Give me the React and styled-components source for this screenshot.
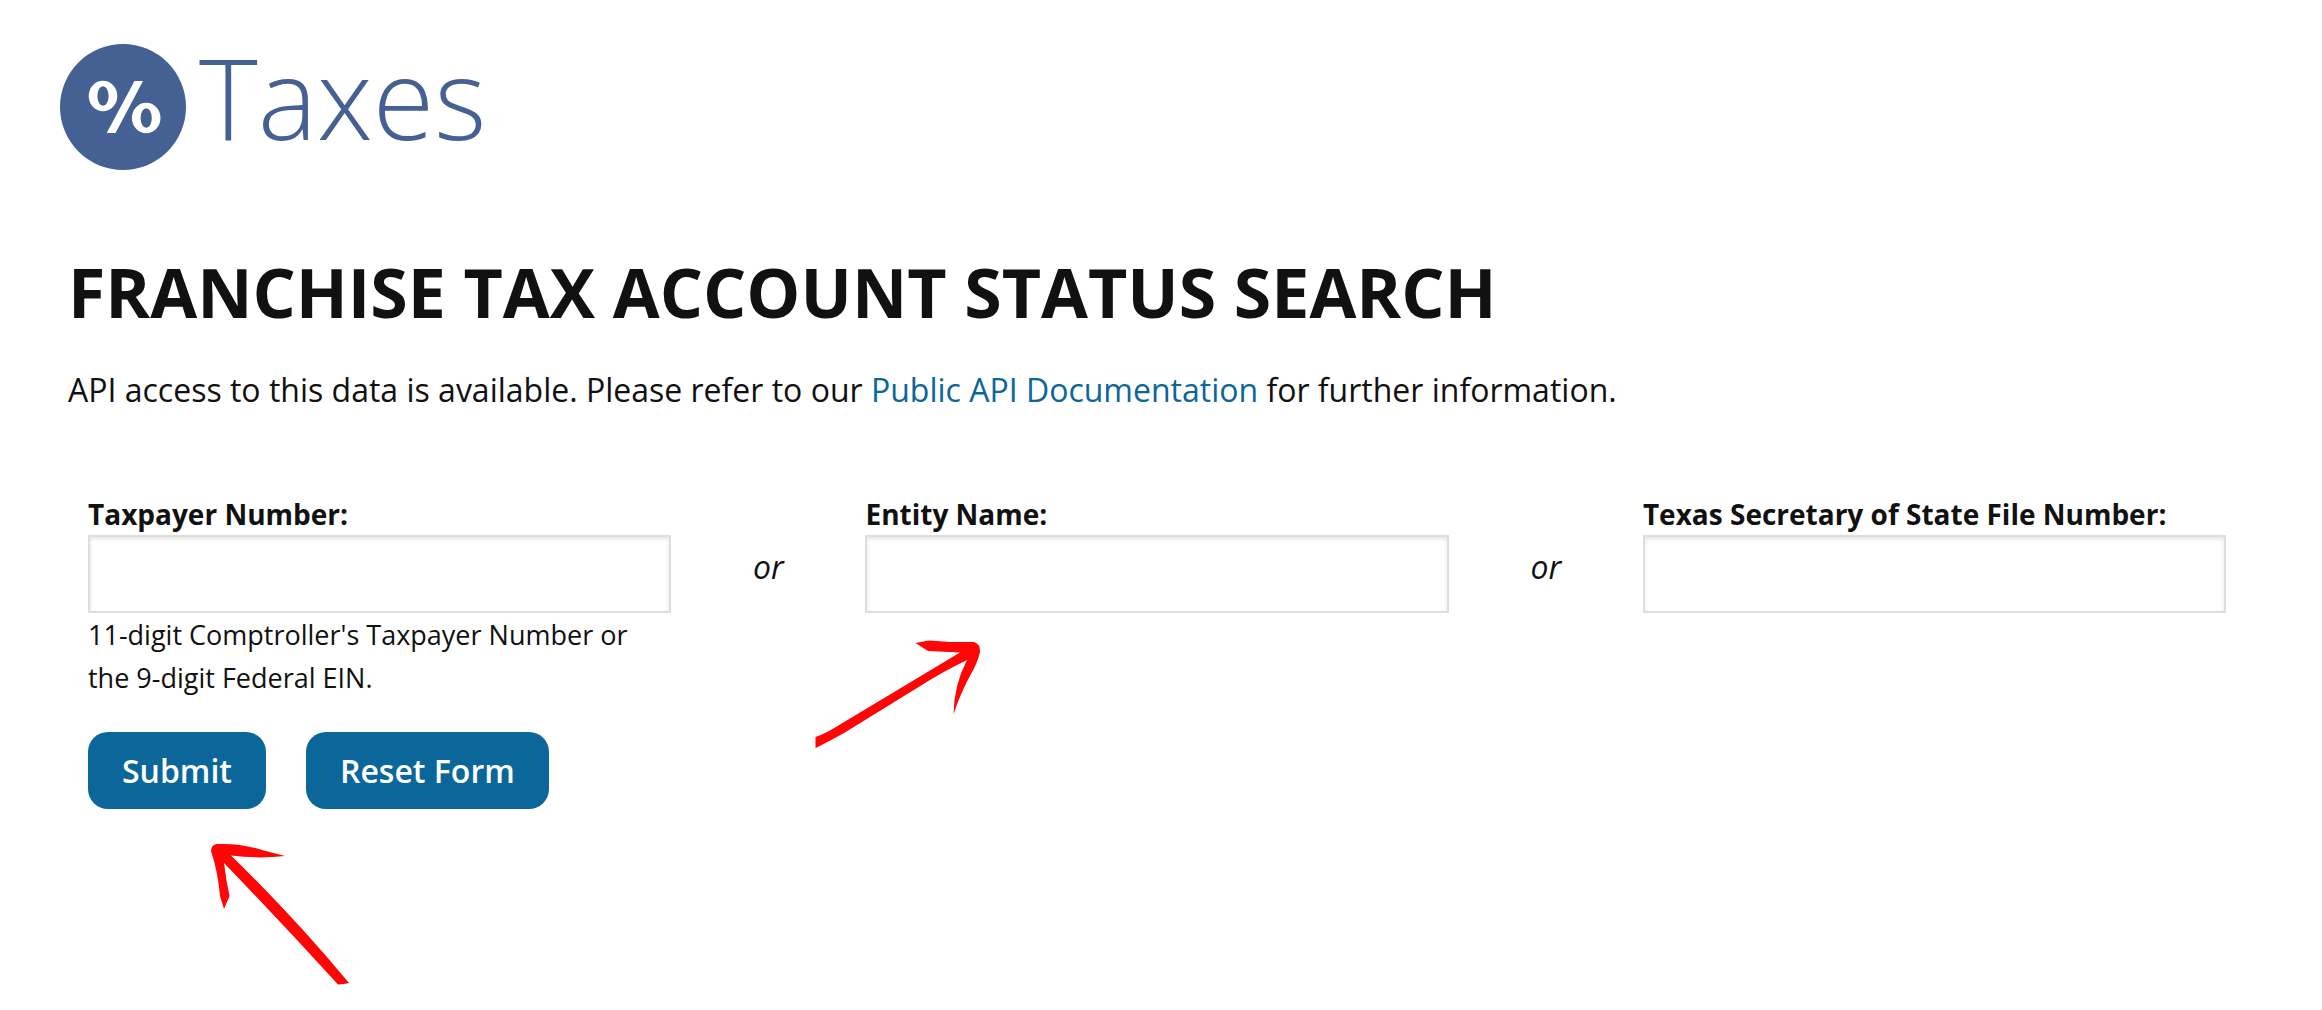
import styled, { createGlobalStyle } from 'styled-components'

const GlobalStyle = createGlobalStyle`
  * {
    box-sizing: border-box;
  }

  body {
    margin: 0;
    background-color: #FFFFFF;
    color: #111111;
    font-family: 'Open Sans', sans-serif;
    font-size: 32px;
    line-height: 50px;
  }
`

const Page = styled.div`
  min-height: 100vh;
  padding: 44px 68px 0;
`

const Brand = styled.header`
  display: flex;
  gap: 13px;
  margin-left: -8px;
  color: #456093;
`

const BrandBadge = styled.svg`
  width: 126px;
  height: 126px;
  flex: none;
  border-radius: 50%;
  background-color: #456093;
  fill: #FFFFFF;
`

const BrandName = styled.span`
  font-size: 112px;
  font-weight: 300;
  line-height: 106px;
`

const Title = styled.h1`
  margin: 80px 0 31px;
  font-size: 68px;
  font-weight: 700;
  line-height: 84px;
  text-transform: uppercase;
`

const Intro = styled.p`
  margin: 0;
`

const Link = styled.a`
  color: #0B6699;
  text-decoration: none;

  &:hover {
    text-decoration: underline;
  }
`

const Form = styled.form`
  margin-top: 80px;
  padding: 0 28px 0 20px;
`

const Fields = styled.div`
  display: grid;
  grid-template-columns: minmax(0, 3fr) minmax(0, 1fr) minmax(0, 3fr) minmax(0, 1fr) minmax(0, 3fr);
  align-items: start;
`

const Field = styled.div`
  position: relative;
`

const Label = styled.label`
  display: block;
  margin-bottom: 2px;
  font-size: 28px;
  font-weight: 700;
  line-height: 38px;
  white-space: nowrap;
`

const Input = styled.input`
  display: block;
  width: 100%;
  height: 78px;
  padding: 0 16px;
  border: 2px solid #DEDEDC;
  border-radius: 0;
  background-color: #FFFFFF;
  box-shadow: inset 0 2px 4px rgba(0, 0, 0, 0.1);
  color: inherit;
  font: inherit;
`

const Hint = styled.p`
  margin: 0;
  font-size: 27px;
  line-height: 43px;
`

const Or = styled.em`
  padding-top: 47px;
  text-align: center;
`

const Buttons = styled.div`
  display: flex;
  gap: 40px;
  margin-top: 33px;
`

const ButtonHolder = styled.div`
  position: relative;
`

const Button = styled.button`
  height: 77px;
  padding: 0 34px;
  border: none;
  border-radius: 20px;
  background-color: #0B6699;
  color: #FFFFFF;
  font-family: inherit;
  font-size: 32px;
  font-weight: 600;
  cursor: pointer;

  &:hover {
    background-color: #084E75;
  }
`

const Arrow = styled.svg`
  position: absolute;
  top: 100%;
  left: ${props => props.$left};
  fill: #FF0505;
  pointer-events: none;
`

const PercentLogo = () => (
  <BrandBadge viewBox='0 0 126 126' role='img' aria-label='%'>
    <path fillRule='evenodd' d='M28.700 52a14.300 15.300 0 1 0 28.600 0a14.300 15.300 0 1 0-28.600 0zM37.400 52a5.600 9.800 0 1 0 11.200 0a5.600 9.800 0 1 0-11.200 0z' />
    <path fillRule='evenodd' d='M71.900 74a14.300 15.300 0 1 0 28.600 0a14.300 15.300 0 1 0-28.600 0zM80.600 74a5.600 9.800 0 1 0 11.200 0a5.600 9.800 0 1 0-11.200 0z' />
    <path d='M74.500 37H83L55.500 89H46.700z' />
  </BrandBadge>
)

// hand drawn arrow pointing up and to the right
const ArrowToField = () => (
  <Arrow $left='-65px' width='200' height='140' viewBox='0 -7 200 140' aria-hidden='true'>
    <path d='M15.500 117Q27 113 40 104.500L160 32.500L128 31L115.500 23L129 20.500L150 22L174 22Q180.500 24 180 32Q177 44 171 54Q161 72 153.500 94Q154 65 167 40Q142 52 117 68L44 113Q28 122 15.500 128Z' />
  </Arrow>
)

// hand drawn arrow pointing up and to the left
const ArrowToSubmit = () => (
  <Arrow $left='92px' width='200' height='180' viewBox='0 -11 200 180' aria-hidden='true'>
    <path d='M31 31Q31 25 37 24Q60 23 82 30L105 36Q78 39 51 35.500Q114 97 169 163L164 164L158 164.500Q100 101 44 43Q46 60 49.500 76L44 89L40 76Q38 52 31 31Z' />
  </Arrow>
)

export default function App () {
  return (
    <>
      <GlobalStyle />
      <Page>
        <Brand>
          <PercentLogo />
          <BrandName>Taxes</BrandName>
        </Brand>
        <main>
          <Title>Franchise Tax Account Status Search</Title>
          <Intro>
            API access to this data is available. Please refer to our{' '}
            <Link href='#api'>Public API Documentation</Link> for further information.
          </Intro>
          <Form onSubmit={e => e.preventDefault()}>
            <Fields>
              <Field>
                <Label htmlFor='taxpayer'>Taxpayer Number:</Label>
                <Input id='taxpayer' type='text' aria-describedby='taxpayer-hint' />
                <Hint id='taxpayer-hint'>
                  11-digit Comptroller's Taxpayer Number or the 9-digit Federal EIN.
                </Hint>
              </Field>
              <Or>or</Or>
              <Field>
                <Label htmlFor='entity'>Entity Name:</Label>
                <Input id='entity' type='text' />
                <ArrowToField />
              </Field>
              <Or>or</Or>
              <Field>
                <Label htmlFor='file-number'>Texas Secretary of State File Number:</Label>
                <Input id='file-number' type='text' />
              </Field>
            </Fields>
            <Buttons>
              <ButtonHolder>
                <Button type='submit'>Submit</Button>
                <ArrowToSubmit />
              </ButtonHolder>
              <Button type='reset'>Reset Form</Button>
            </Buttons>
          </Form>
        </main>
      </Page>
    </>
  )
}
